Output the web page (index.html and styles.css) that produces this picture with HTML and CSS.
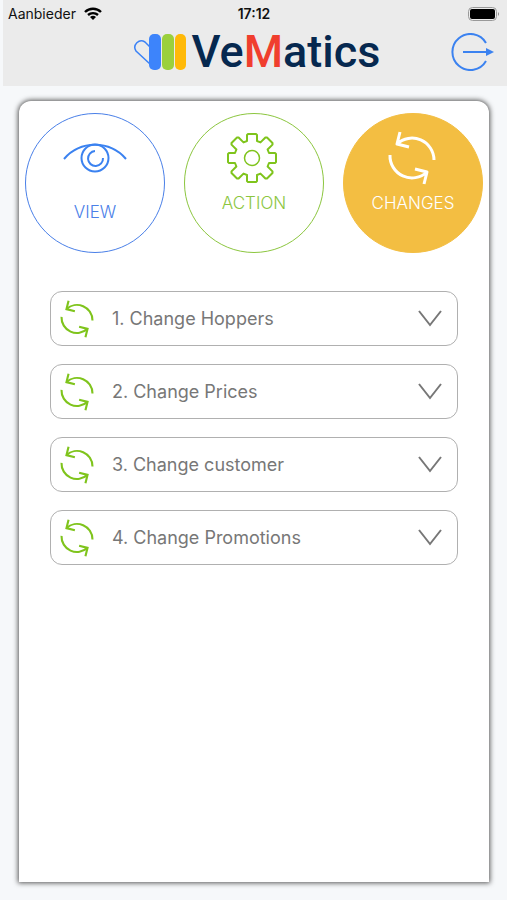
FILE: index.html
```html
<!DOCTYPE html>
<html lang="en">
<head>
  <title>VeMatics</title>
  <meta charset="utf-8">
  <meta name="viewport" content="width=device-width">
  <link rel="stylesheet" href="styles.css">
</head>
<body>
  <!-- shared icons -->
  <svg class="symbols" aria-hidden="true">
    <symbol id="icon-changes" viewBox="0 0 48 54">
      <path d="M12 1L9 13L21 16M9 13A22 22 0 0 1 46 29"/>
      <path d="M36 53L39 41L27 38M39 41A22 22 0 0 1 2 24"/>
    </symbol>
    <symbol id="icon-down" viewBox="0 0 24 17">
      <path d="M1 1L12 15L23 1"/>
    </symbol>
  </svg>

  <header class="header">
    <div class="status">
      <div class="carrier">
        <span>Aanbieder</span>
        <svg width="18" height="13" viewBox="0 0 18 13" aria-hidden="true">
          <path d="M1 5A11.500 11.500 0 0 1 17 5M4 8A7.500 7.500 0 0 1 14 8" fill="none" stroke="#000" stroke-width="2.400"/>
          <path d="M9 13L6 10A4.500 4.500 0 0 1 12 10Z"/>
        </svg>
      </div>
      <span class="time">17:12</span>
      <svg class="battery" width="32" height="14" viewBox="0 0 32 14" aria-hidden="true">
        <rect x="0.500" y="0.500" width="28" height="13" rx="4" fill="none" stroke="#999"/>
        <rect x="2" y="2" width="25" height="10" rx="2"/>
        <path d="M30 5Q32 7 30 9Z" fill="#888"/>
      </svg>
    </div>
    <div class="bar">
      <div class="logo">
        <svg width="54" height="36" viewBox="0 0 54 36" aria-hidden="true">
          <path d="M17 30L3 17A6.500 6.500 0 0 1 12 8L17 13" fill="none" stroke="#3b82f6" stroke-width="1.500"/>
          <rect x="16" width="12" height="36" rx="5" fill="#3d84fb"/>
          <rect x="29" width="12" height="36" rx="5" fill="#9bd03c"/>
          <rect x="42" width="11" height="36" rx="5" fill="#ffb908"/>
        </svg>
        <span class="name">Ve<span class="red">M</span>atics</span>
      </div>
      <button class="logout" aria-label="Log out">
        <svg width="44" height="38" viewBox="0 0 44 38">
          <path d="M36 10A18 18 0 1 0 36 28M13 19H37" fill="none" stroke="#3b82f0" stroke-width="2"/>
          <path d="M36 15L44 19L36 23Z" fill="#3b82f0"/>
        </svg>
      </button>
    </div>
  </header>

  <main class="panel">
    <nav class="tabs">
      <button class="tab view">
        <svg width="66" height="30" viewBox="0 0 66 30">
          <path d="M2 16A41 41 0 0 1 64 16M33 8A7.500 7.500 0 1 0 41 15"/>
          <circle cx="33" cy="15" r="13.500"/>
        </svg>
        <span>VIEW</span>
      </button>
      <button class="tab action">
        <svg width="54" height="50" viewBox="-25 -25 54 50">
          <path d="M-4 -24H4L5 -23V-17L8.500 -15.600L13.400 -20.500H15L20.500 -15V-13.400L15.600 -8.500L17 -5H23L24 -4V4L23 5H17L15.600 8.500L20.500 13.400V15L15 20.500H13.400L8.500 15.600L5 17V23L4 24H-4L-5 23V17L-8.500 15.600L-13.400 20.500H-15L-20.500 15V13.400L-15.600 8.500L-17 5H-23L-24 4V-4L-23 -5H-17L-15.600 -8.500L-20.500 -13.400V-15L-15 -20.500H-13.400L-8.500 -15.600L-5 -17V-23Z"/>
          <circle r="7.500" stroke-width="1.500"/>
        </svg>
        <span>ACTION</span>
      </button>
      <button class="tab changes">
        <svg width="50" height="54" viewBox="0 0 50 54"><use href="#icon-changes" width="48" height="54"/></svg>
        <span>CHANGES</span>
      </button>
    </nav>

    <div class="list">
      <button class="item">
        <svg class="icon" width="34" height="38"><use href="#icon-changes"/></svg>
        <span class="label">1. Change Hoppers</span>
        <svg class="arrow" width="24" height="17"><use href="#icon-down"/></svg>
      </button>
      <button class="item">
        <svg class="icon" width="34" height="38"><use href="#icon-changes"/></svg>
        <span class="label">2. Change Prices</span>
        <svg class="arrow" width="24" height="17"><use href="#icon-down"/></svg>
      </button>
      <button class="item">
        <svg class="icon" width="34" height="38"><use href="#icon-changes"/></svg>
        <span class="label">3. Change customer</span>
        <svg class="arrow" width="24" height="17"><use href="#icon-down"/></svg>
      </button>
      <button class="item">
        <svg class="icon" width="34" height="38"><use href="#icon-changes"/></svg>
        <span class="label">4. Change Promotions</span>
        <svg class="arrow" width="24" height="17"><use href="#icon-down"/></svg>
      </button>
    </div>
  </main>
</body>
</html>
```
FILE: styles.css
```css
* {
  box-sizing: border-box;
}
body {
  margin: 0;
  min-height: 100vh;
  display: flex;
  flex-direction: column;
  background: #f6f8fa;
  font-family: Inter, "Liberation Sans", sans-serif;
}
button {
  margin: 0;
  padding: 0;
  border: 0;
  background: none;
  font: inherit;
  color: inherit;
  cursor: pointer;
}
svg {
  display: block;
  flex: none;
}
.symbols {
  position: absolute;
  width: 0;
  height: 0;
}

/* header */
.header {
  margin-left: 3px;
  height: 86px;
  background: #ebebeb;
}
.status, .bar {
  display: grid;
  grid-template-columns: 1fr auto 1fr;
  align-items: center;
}
.status {
  height: 27px;
  padding: 0 7px 0 5px;
  font-size: 14px;
  line-height: 20px;
  color: #111;
}
.carrier {
  display: flex;
  align-items: center;
  gap: 8px;
}
.time {
  font-weight: 600;
}
.battery {
  justify-self: end;
}
.bar {
  height: 50px;
  padding-right: 13px;
  padding-left: 16px;
}
.logo {
  grid-column: 2;
  display: flex;
  align-items: center;
  gap: 5px;
}
.name {
  font-family: Roboto, "Liberation Sans", sans-serif;
  font-size: 45px;
  font-weight: 500;
  line-height: 50px;
  color: #06284f;
}
.red {
  color: #f03e2e;
}
.logout {
  justify-self: end;
}

/* content */
.panel {
  flex: 1;
  margin: 15px 18px 18px 19px;
  padding: 12px 6px;
  background: #fff;
  border-radius: 12px 12px 0 0;
  box-shadow: 0 0 5px 1px #555;
}
.tabs {
  display: flex;
  justify-content: space-between;
}
.tab {
  width: 140px;
  height: 140px;
  border: 1px solid;
  border-radius: 50%;
  display: flex;
  flex-direction: column;
  align-items: center;
  font-size: 17px;
  font-weight: 300;
  line-height: 20px;
}
.tab svg {
  fill: none;
  stroke: currentColor;
  stroke-width: 2;
  stroke-linejoin: round;
}
.view {
  padding-top: 29px;
  gap: 29px;
  color: #4a80e8;
}
.action {
  padding-top: 19px;
  gap: 10px;
  color: #8cc63f;
}
.view svg {
  stroke: #3b82f0;
}
.action svg {
  stroke: #7fc41c;
}
.changes {
  padding-top: 17px;
  gap: 8px;
  background: #f3be42;
  border-color: #f3be42;
  color: #fff;
}
.changes svg {
  stroke-width: 3;
}
.list {
  margin: 38px 25px;
  display: flex;
  flex-direction: column;
  gap: 18px;
}
.item {
  height: 55px;
  padding: 0 15px 0 9px;
  border: 1px solid #b0b0b0;
  border-radius: 12px;
  display: flex;
  align-items: center;
  gap: 18px;
  font-size: 18px;
  line-height: 24px;
  color: #777;
  text-align: left;
}
.icon {
  fill: none;
  stroke: #7fc41c;
  stroke-width: 3;
}
.label {
  flex: 1;
}
.arrow {
  fill: none;
  stroke: #777;
  stroke-width: 2;
}
```
